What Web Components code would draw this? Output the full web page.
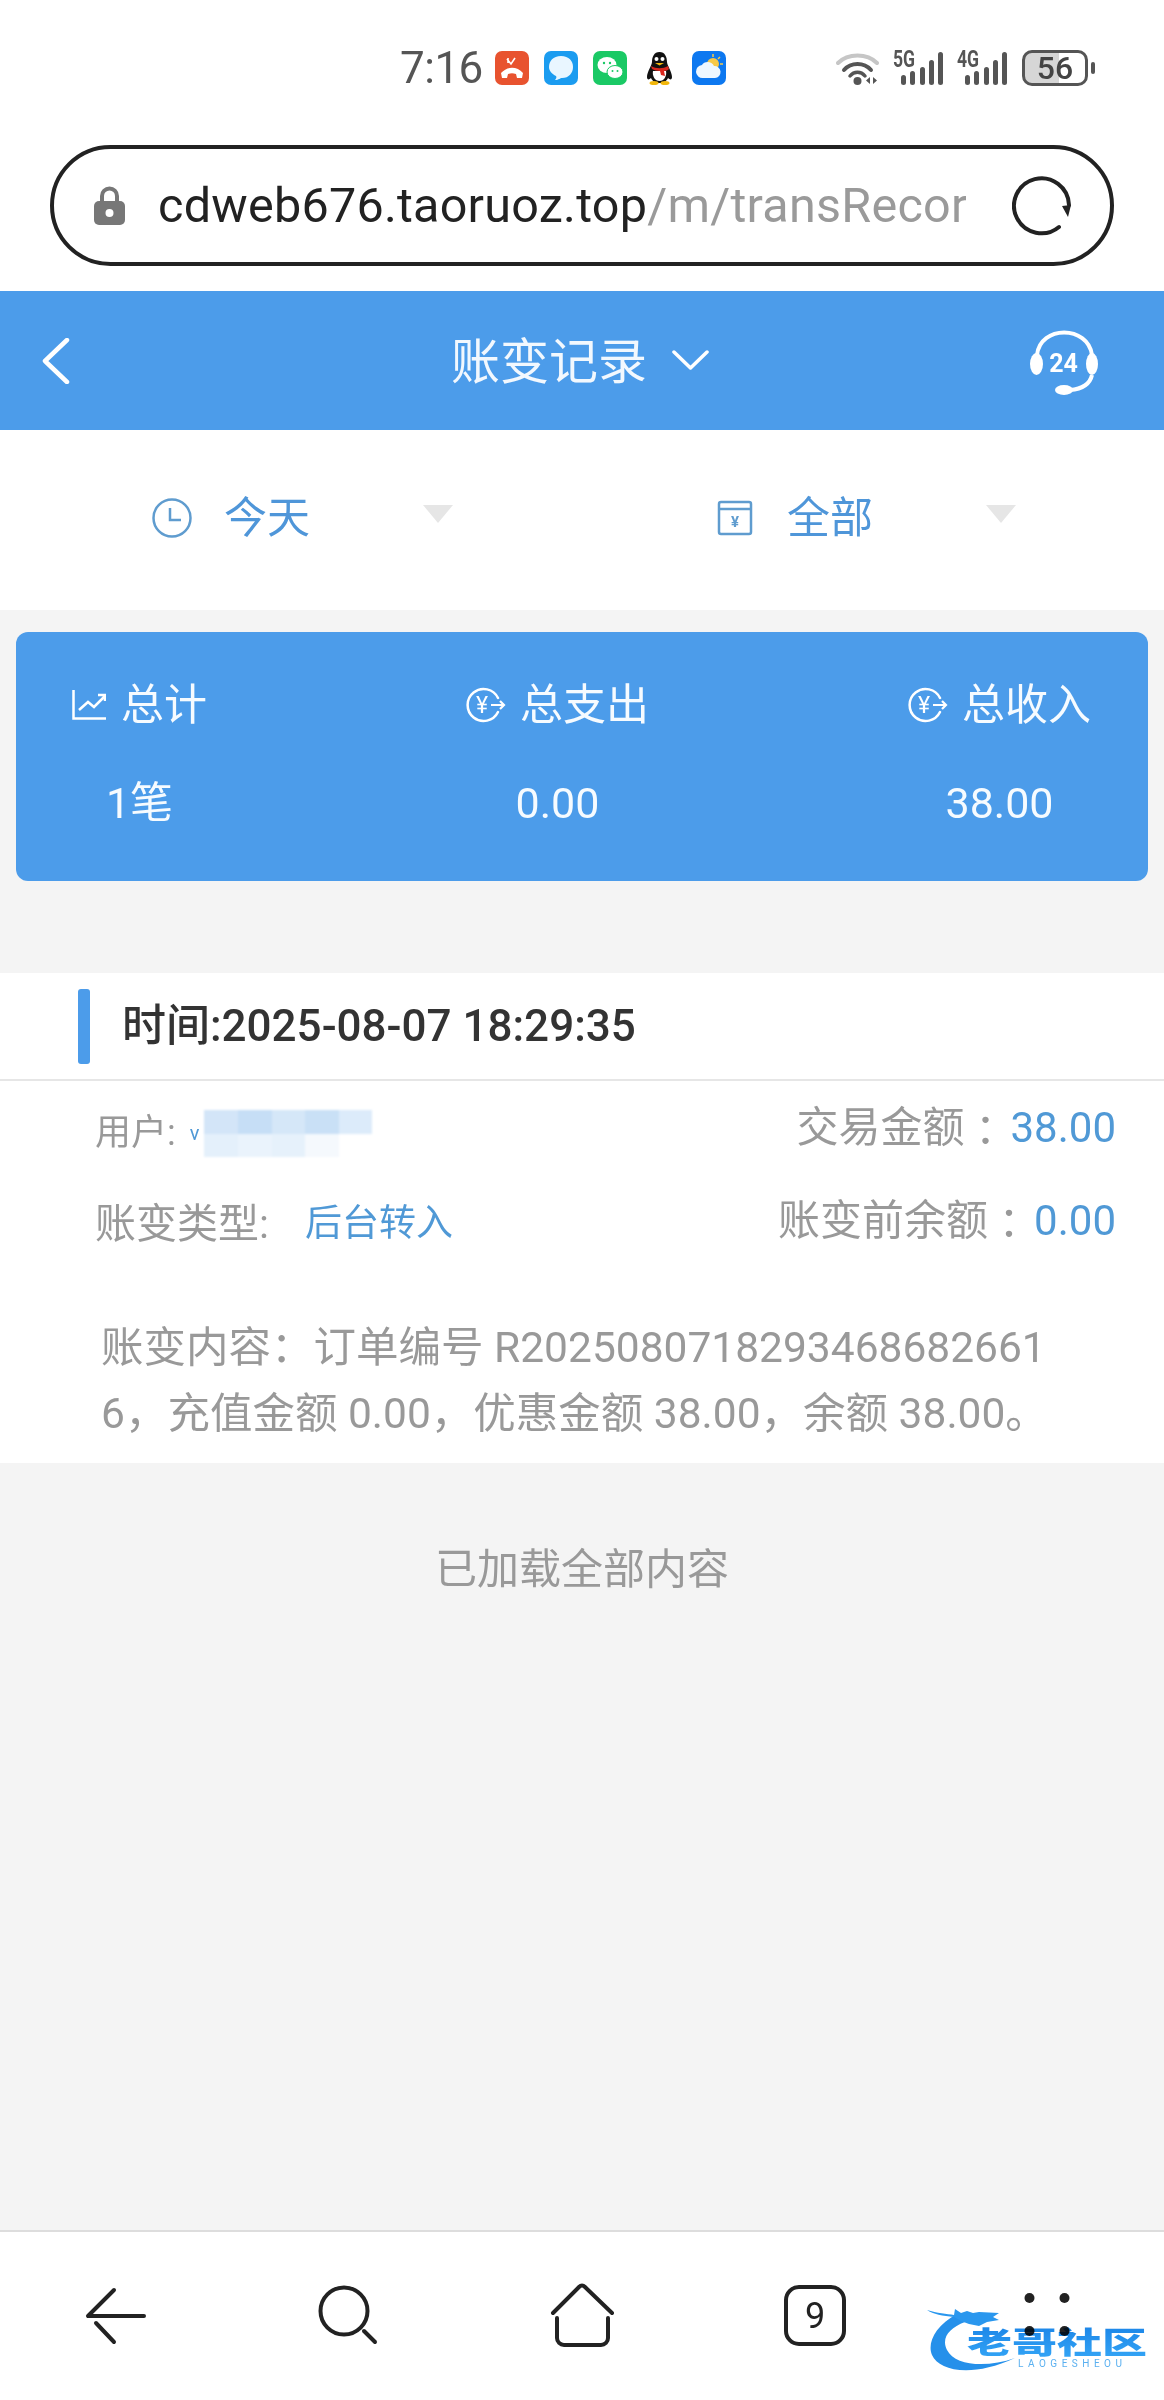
<!DOCTYPE html>
<html lang="zh">
<head>
<meta charset="utf-8">
<title>账变记录</title>
<style>
	html, body {
		margin: 0;
		height: 2400px;
		overflow: hidden;
	}

	body {
		display: flex;
		flex-direction: column;
		background: #f4f4f4;
		font-family: Roboto, "Noto Sans CJK SC", sans-serif;
		color: #333;
	}

	.spacer {
		flex: 1;
	}
</style>
</head>
<body>
	<status-bar></status-bar>
	<url-bar><span>cdweb676.taoruoz.top</span><span slot="rest">/m/transRecor</span></url-bar>
	<nav-header>账变记录</nav-header>
	<filter-bar></filter-bar>
	<summary-card></summary-card>
	<record-item></record-item>
	<load-end>已加载全部内容</load-end>
	<div class="spacer"></div>
	<bottom-bar></bottom-bar>

<script>
class Shadow extends HTMLElement {
	constructor() {
		super()
		this.attachShadow({mode:'open'})
		this.shadowRoot.innerHTML = this.render()
	}
}

class SignalIcon extends Shadow {
	render() {
		return /*html*/`
		<style>
			:host { display: block; width: 50px; height: 36px; }
			svg { display: block; margin-top: -10px; }
			text { font-size: 22px; font-weight: 700; fill: #555; }
			rect { fill: #555; }
		</style>
		<svg width="50" height="46" viewBox="0 -10 50 46">
			<text x="0" y="15.500" transform="scale(.8 1.1)">${this.getAttribute('label')}</text>
			<rect x="8" y="25" width="5" height="10" rx="2.500"/>
			<rect x="17" y="21" width="5" height="14" rx="2.500"/>
			<rect x="27" y="17" width="5" height="18" rx="2.500"/>
			<rect x="36" y="10" width="5" height="25" rx="2.500"/>
			<rect x="45" y="2" width="5" height="33" rx="2.500"/>
		</svg>`
	}
}

class StatusBar extends Shadow {
	render() {
		return /*html*/`
		<style>
			:host {
				display: flex;
				align-items: center;
				height: 136px;
				padding: 0 69px 0 400px;
				background: #fff;
				color: #555;
			}
			svg { display: block; flex: none; }
			.time { font-size: 44px; margin-right: 12px; width: 83px; white-space: nowrap; letter-spacing: -.5px; }
			.app { margin-right: 15px; }
			.right { display: flex; align-items: center; margin-left: auto; }
			.battery {
				width: 66px;
				height: 36px;
				box-sizing: border-box;
				margin-left: 15px;
				border: 3px solid #555;
				border-radius: 10px;
				background: linear-gradient(90deg, #d6d6d6 56%, #fff 56%);
				font-size: 32px;
				line-height: 30px;
				font-weight: 500;
				text-align: center;
				color: #444;
			}
			.nub { width: 4px; height: 12px; margin-left: 3px; border-radius: 2px; background: #555; }
		</style>
		<span class="time">7:16</span>
		<svg class="app" width="34" height="34" viewBox="0 0 34 34">
			<rect width="34" height="34" rx="7" fill="#e8532f"/>
			<path d="M12 8l4 5 4-6M13 7v5" fill="none" stroke="#fff" stroke-width="1.600"/>
			<path d="M6 22c6-7 16-7 22 0l-1 5h-5l-1-4c-3-1-5-1-8 0l-1 4H7z" fill="#fff"/>
		</svg>
		<svg class="app" width="34" height="34" viewBox="0 0 34 34">
			<rect width="34" height="34" rx="7" fill="#1b9cf0"/>
			<path d="M17 5c8 0 12 5 12 11s-4 11-11 11c-2 0-3 2-7 2 1-1 2-3 1-4-4-2-7-5-7-9C5 10 9 5 17 5z" fill="#e9f6ff"/>
		</svg>
		<svg class="app" width="34" height="34" viewBox="0 0 34 34" style="margin-right:19px">
			<rect width="34" height="34" rx="7" fill="#1ac965"/>
			<ellipse cx="14" cy="14" rx="9.500" ry="8" fill="#fff"/>
			<ellipse cx="22" cy="21" rx="8" ry="6.500" fill="#fff" stroke="#1ac965"/>
			<circle cx="11" cy="12" r="1.200" fill="#1ac965"/><circle cx="17" cy="12" r="1.200" fill="#1ac965"/>
			<circle cx="19.500" cy="20" r="1" fill="#1ac965"/><circle cx="24.500" cy="20" r="1" fill="#1ac965"/>
		</svg>
		<svg class="app" width="27" height="34" viewBox="0 0 27 34" style="margin-right:19px">
			<path d="M13.500 1C8 1 6 6 6 11c0 3-5 10-5 15 0 3 2 3 4 1 1 3 5 5 8.500 5s7.500-2 8.500-5c2 2 4 2 4-1 0-5-5-12-5-15 0-5-2-10-7.500-10z" fill="#111"/>
			<path d="M7 20c-1 5 2 10 6.500 10S21 25 20 20z" fill="#fff"/>
			<path d="M5 15c5 3 12 3 17 0l1 3c-1 1-3 2-5 2l1 5-4-1-1-4c-3 0-6-1-8-2z" fill="#d9271e"/>
			<ellipse cx="8" cy="32" rx="4.500" ry="2" fill="#f2b70c"/><ellipse cx="19" cy="32" rx="4.500" ry="2" fill="#f2b70c"/>
			<circle cx="10.500" cy="8" r="2" fill="#fff"/><circle cx="16.500" cy="8" r="2" fill="#fff"/>
			<path d="M9 12h9l-4.500 2.500z" fill="#f2b70c"/>
		</svg>
		<svg width="34" height="34" viewBox="0 0 34 34">
			<rect width="34" height="34" rx="7" fill="#0d78f0"/>
			<circle cx="21" cy="13" r="6" fill="#f7c948"/>
			<path d="M21 3v3M28 6l-2 2M31 13h-3" stroke="#f7c948" stroke-width="1.500"/>
			<path d="M11 27a6.500 6.500 0 0 1-1-13c2-4 10-4 12 1a6 6 0 0 1 1 12z" fill="#eef7ff"/>
		</svg>
		<div class="right">
			<svg width="43" height="36" viewBox="0 0 43 36" style="margin-right:14px">
				<g fill="none" stroke-linecap="round">
					<path d="M2 13C12 3 31 3 41 13" stroke="#c6c6c6" stroke-width="4"/>
					<path d="M8 20C15 12 28 12 35 20" stroke="#555" stroke-width="4"/>
					<path d="M14 26C18 21 25 21 29 26" stroke="#555" stroke-width="3.500"/>
				</g>
				<circle cx="21.500" cy="31" r="4" fill="#555"/>
				<path d="M34 27v7l-4-3.500zM37 27v7l4-3.500z" fill="#555"/>
			</svg>
			<signal-icon label="5G"></signal-icon>
			<signal-icon label="4G" style="margin-left:14px"></signal-icon>
			<div class="battery">56</div>
			<div class="nub"></div>
		</div>`
	}
}

class UrlBar extends Shadow {
	render() {
		return /*html*/`
		<style>
			:host {
				display: block;
				padding: 9px 50px 25px;
				background: #fff;
			}
			.pill {
				display: flex;
				align-items: center;
				box-sizing: border-box;
				height: 121px;
				padding: 0 38px 0 40px;
				border: 4px solid #222;
				border-radius: 61px;
			}
			svg { display: block; flex: none; }
			.addr {
				width: 808px;
				margin-left: 33px;
				overflow: hidden;
				white-space: nowrap;
				font-size: 48.500px;
				letter-spacing: .25px;
				color: #222;
			}
			.rest { color: #9a9a9a; }
			.reload { margin-left: auto; }
		</style>
		<div class="pill">
			<svg width="31" height="39" viewBox="0 0 31 39">
				<path d="M8 17V10a7.500 7.500 0 0 1 15 0v7" fill="none" stroke="#777" stroke-width="4"/>
				<rect y="15" width="31" height="24" rx="5" fill="#777"/>
				<circle cx="15.500" cy="27" r="4" fill="#fff"/>
			</svg>
			<div class="addr"><slot></slot><span class="rest"><slot name="rest"></slot></span></div>
			<svg class="reload" width="60" height="60" viewBox="0 0 60 60">
				<path d="M47 51A27.500 27.500 0 1 1 57 29" fill="none" stroke="#222" stroke-width="4" stroke-linecap="round"/>
				<path d="M50 30l9-1-3 12z" fill="#222"/>
			</svg>
		</div>`
	}
}

class NavHeader extends Shadow {
	render() {
		return /*html*/`
		<style>
			:host {
				display: grid;
				grid-template-columns: 1fr auto 1fr;
				align-items: center;
				height: 139px;
				padding: 0 42px;
				background: #4c9cea;
				color: #f2f8fe;
			}
			svg { display: block; }
			.title { display: flex; align-items: center; gap: 25px; font-size: 49px; margin-right: 4px; }
			.title span { margin-bottom: 7px; }
			.title svg { margin-bottom: 2px; }
			.cs { justify-self: end; margin-right: 24px; margin-top: 3px; }
			text { font-size: 25px; font-weight: 700; fill: #fff; }
		</style>
		<svg width="28" height="46" viewBox="0 0 28 46">
			<path d="M25 2L3 23l22 21" fill="none" stroke="#fff" stroke-width="4.500" stroke-linecap="round" stroke-linejoin="round"/>
		</svg>
		<div class="title">
			<span><slot></slot></span>
			<svg width="37" height="20" viewBox="0 0 37 20">
				<path d="M2 2l16.500 16L35 2" fill="none" stroke="#fff" stroke-width="3.500" stroke-linecap="round" stroke-linejoin="round"/>
			</svg>
		</div>
		<svg class="cs" width="68" height="65" viewBox="0 0 68 65">
			<path d="M7 25C10 -5 58 -5 62 25" fill="none" stroke="#fff" stroke-width="4"/>
			<ellipse cx="6.500" cy="34" rx="6.500" ry="11" fill="#fff"/>
			<ellipse cx="62" cy="34" rx="6" ry="11" fill="#fff"/>
			<path d="M62 45C60 54 52 59 40 60" fill="none" stroke="#fff" stroke-width="4"/>
			<ellipse cx="34" cy="60" rx="9" ry="5" fill="#fff"/>
			<text x="33.500" y="42" text-anchor="middle">24</text>
		</svg>`
	}
}

class FilterBar extends Shadow {
	render() {
		return /*html*/`
		<style>
			:host {
				display: grid;
				grid-template-columns: 563px 1fr;
				align-items: center;
				box-sizing: border-box;
				height: 180px;
				padding: 0 0 4px 152px;
				background: #fff;
				font-size: 43px;
				color: #4f96d9;
			}
			.item { display: flex; align-items: center; }
			svg { display: block; flex: none; }
			span { width: 86px; margin: 0 0 8px 32px; white-space: nowrap; }
			i {
				margin: -8px 0 0 113px;
				border: 15px solid transparent;
				border-top: 18px solid #e6e6e6;
				border-bottom: 0;
			}
			g { fill: none; stroke: #5f9ccf; stroke-width: 2.500px; }
			text { font-size: 15px; font-weight: 700; fill: #5f9ccf; }
		</style>
		<div class="item">
			<svg width="40" height="40" viewBox="0 0 40 40">
				<g>
					<circle cx="20" cy="20" r="18.500"/>
					<path d="M18 10v12h11"/>
				</g>
			</svg>
			<span>今天</span><i></i>
		</div>
		<div class="item">
			<svg width="40" height="40" viewBox="0 0 40 40">
				<g stroke-linejoin="round">
					<rect x="4" y="4" width="32" height="32" rx="2"/>
					<path d="M4 11h32"/>
				</g>
				<text x="20" y="29" text-anchor="middle">¥</text>
			</svg>
			<span>全部</span><i></i>
		</div>`
	}
}

class SummaryCol extends Shadow {
	render() {
		return /*html*/`
		<style>
			:host {
				display: flex;
				flex-direction: column;
				align-items: center;
				gap: 40px;
				line-height: 58px;
				white-space: nowrap;
			}
			.label { display: flex; align-items: center; font-size: 43px; }
			.value { font-size: 43px; }
		</style>
		<div class="label"><slot name="icon"></slot><slot name="label"></slot></div>
		<div class="value"><slot></slot></div>`
	}
}

class SummaryCard extends Shadow {
	render() {
		const money = /*html*/`
			<svg slot="icon" width="40" height="36" viewBox="0 0 40 36" style="margin-right:14px">
				<path d="M32 11A16 16 0 1 0 32 25" fill="none" stroke="#fff" stroke-width="2.500" stroke-linecap="round"/>
				<path d="M25 18h13M34 14l4 4-4 4" fill="none" stroke="#fff" stroke-width="2.200"/>
				<text x="16" y="26" text-anchor="middle" font-size="23" fill="#fff">¥</text>
			</svg>`
		return /*html*/`
		<style>
			:host {
				display: flex;
				justify-content: space-between;
				margin: 22px 16px 92px;
				padding: 44px 57px 49px 56px;
				border-radius: 12px;
				background: #4c9cea;
				color: #f6fbff;
			}
			svg { display: block; }
		</style>
		<summary-col>
			<svg slot="icon" width="34" height="30" viewBox="0 0 34 30" style="margin-right:15px">
				<path d="M1.500 0V28.500H34M7 20l9-8 6 5 11-11M26 5h7v6" fill="none" stroke="#fff" stroke-width="2.500"/>
			</svg>
			<span slot="label">总计</span>
			1笔
		</summary-col>
		<summary-col>${money}<span slot="label">总支出</span>0.00</summary-col>
		<summary-col>${money}<span slot="label">总收入</span>38.00</summary-col>`
	}
}

class RecordItem extends Shadow {
	render() {
		return /*html*/`
		<style>
			:host { display: block; background: #fff; color: #999; }
			.head {
				display: flex;
				align-items: center;
				height: 106px;
				padding-left: 78px;
				border-bottom: 2px solid #e6e6e6;
				font-size: 44px;
				font-weight: 500;
				color: #333;
			}
			.head i { width: 12px; height: 75px; margin-right: 32px; border-radius: 3px; background: #4c9cea; }
			.head span { margin-bottom: 8px; }
			.rows { display: flex; justify-content: space-between; height: 170px; padding: 0 48px 0 95px; }
			.left { display: flex; flex-direction: column; gap: 43px; padding-top: 28px; font-size: 36px; line-height: 48px; }
			.right { display: flex; flex-direction: column; align-items: flex-end; gap: 45px; padding-top: 23px; font-size: 42px; line-height: 48px; }
			.row { display: flex; align-items: center; white-space: nowrap; }
			.colon { font-family: "Noto Sans CJK TC", sans-serif; margin-right: 4px; }
			b { font-weight: 400; color: #5099d6; }
			.kind { font-size: 41px; }
			.kind b { font-size: 37px; margin-left: 36px; }
			.mask {
				display: grid;
				grid-template-columns: repeat(5, 1fr);
				width: 168px;
				height: 47px;
				margin: 1px 0 0 5px;
				filter: blur(1px);
			}
			.content { margin: 0; padding: 64px 100px 16px 101px; font-size: 42.500px; line-height: 66px; word-break: break-all; height: 132px; }
		</style>
		<div class="head"><i></i><span>时间:2025-08-07 18:29:35</span></div>
		<div class="rows">
			<div class="left">
				<div class="row">用户: <b style="margin-left:14px;font-size:20px">v</b>
					<div class="mask">
						<span style="background:#d3e5f8"></span><span style="background:#c6def6"></span><span style="background:#d5e7f8"></span><span style="background:#c9e0f6"></span><span style="background:#dcebfa"></span>
						<span style="background:#e4f0fb"></span><span style="background:#eaf3fc"></span><span style="background:#e6f1fb"></span><span style="background:#f5f9fd"></span><span style="background:#fff"></span>
					</div>
				</div>
				<div class="row kind">账变类型:<b>后台转入</b></div>
			</div>
			<div class="right">
				<div class="row">交易金额<span class="colon">：</span><b>38.00</b></div>
				<div class="row">账变前余额<span class="colon">：</span><b>0.00</b></div>
			</div>
		</div>
		<p class="content">账变内容：订单编号 R20250807182934686826616，充值金额 0.00，优惠金额 38.00，余额 38.00。</p>`
	}
}

class LoadEnd extends Shadow {
	render() {
		return /*html*/`
		<style>
			:host {
				display: block;
				margin-top: 77px;
				font-size: 42px;
				line-height: 60px;
				text-align: center;
				color: #999;
			}
		</style>
		<slot></slot>`
	}
}

class BrandMark extends Shadow {
	render() {
		return /*html*/`
		<style>
			:host {
				position: absolute;
				left: 927px;
				top: 76px;
				width: 220px;
				height: 66px;
				mix-blend-mode: multiply;
			}
			svg { position: absolute; left: 0; top: 0; }
			.name {
				position: absolute;
				left: 40px;
				top: 18px;
				transform: scaleX(1.5);
				transform-origin: 0 0;
				font-size: 30px;
				line-height: 34px;
				font-weight: 900;
				white-space: nowrap;
				background: linear-gradient(#1c86e8, #35a6f6);
				-webkit-background-clip: text;
				background-clip: text;
				color: transparent;
			}
			.en {
				position: absolute;
				left: 91px;
				top: 50px;
				font-size: 10px;
				line-height: 12px;
				letter-spacing: 4.500px;
				white-space: nowrap;
				color: #5ab0f0;
			}
		</style>
		<svg width="100" height="66" viewBox="0 0 100 66">
			<path d="M30 6C8 18 0 35 5 47 12 63 45 70 88 50 60 60 28 58 20 42 14 30 22 20 38 14Z" fill="#2590ea"/>
			<path d="M0 2C10 5 20 6 27 7L28 1 34 5 40 3 46 5 52 4 72 5 66 9 72 12 60 14 52 18 42 16 34 13 27 9C16 8 6 6 0 2Z" fill="#2a97ee"/>
		</svg>
		<div class="name">老哥社区</div>
		<div class="en">LAOGESHEOU</div>`
	}
}

class BottomBar extends Shadow {
	render() {
		return /*html*/`
		<style>
			:host {
				position: relative;
				display: grid;
				grid-template-columns: repeat(5, 1fr);
				align-items: center;
				justify-items: center;
				box-sizing: border-box;
				height: 170px;
				border-top: 2px solid #ddd;
				background: #fff;
			}
			svg { display: block; }
			g { fill: none; stroke: #222; stroke-width: 4px; stroke-linecap: round; stroke-linejoin: round; }
			text { font-size: 36px; fill: #222; }
		</style>
		<svg width="80" height="80" viewBox="0 0 80 80">
			<g><path d="M38 14L12 40H68M20 47L38 66"/></g>
		</svg>
		<svg width="80" height="80" viewBox="0 0 80 80">
			<g><circle cx="35" cy="35" r="23.500"/><path d="M55 55L66 66"/></g>
		</svg>
		<svg width="80" height="80" viewBox="0 0 80 80">
			<g><path d="M11 37L37 11Q40 8 43 11L70 37M15 42V62A7 7 0 0 0 22 69H59A7 7 0 0 0 66 62V42"/></g>
		</svg>
		<svg width="80" height="80" viewBox="0 0 80 80">
			<g><rect x="11" y="11" width="58" height="57" rx="13"/></g>
			<text x="40" y="52" text-anchor="middle">9</text>
		</svg>
		<svg width="80" height="80" viewBox="0 0 80 80" fill="#222">
			<circle cx="21.500" cy="22" r="5"/><circle cx="56.500" cy="22" r="5"/>
			<circle cx="21.500" cy="55" r="5"/><circle cx="56.500" cy="55" r="5"/>
		</svg>
		<brand-mark></brand-mark>`
	}
}

customElements.define('signal-icon', SignalIcon)
customElements.define('status-bar', StatusBar)
customElements.define('url-bar', UrlBar)
customElements.define('nav-header', NavHeader)
customElements.define('filter-bar', FilterBar)
customElements.define('summary-col', SummaryCol)
customElements.define('summary-card', SummaryCard)
customElements.define('record-item', RecordItem)
customElements.define('load-end', LoadEnd)
customElements.define('brand-mark', BrandMark)
customElements.define('bottom-bar', BottomBar)
</script>
</body>
</html>
